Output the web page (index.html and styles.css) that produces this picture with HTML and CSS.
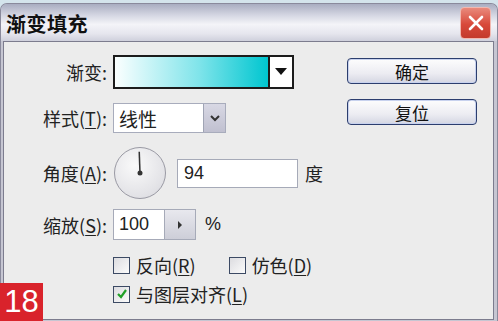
FILE: index.html
```html
<!DOCTYPE html>
<html lang="zh-CN">
<head>
  <meta charset="UTF-8">
  <title>渐变填充</title>
  <link rel="stylesheet" href="styles.css">
</head>
<body>
  <div class="window">
    <div class="titlebar">
      <span class="title">渐变填充</span>
      <span class="close">
        <svg width="18" height="18" viewBox="0 0 18 18"><path d="M3 3 L15 15 M15 3 L3 15" stroke="#fff" stroke-width="2.6" stroke-linecap="round"/></svg>
      </span>
    </div>

    <div class="content">
      <div class="form">
        <div class="row r1">
          <label class="lbl">渐变:</label>
          <div class="gradient">
            <span class="swatch"></span>
            <span class="arrow">
              <svg width="12" height="8" viewBox="0 0 12 8"><path d="M0 0 H12 L6 7 Z" fill="#111"/></svg>
            </span>
          </div>
        </div>

        <div class="row r2">
          <label class="lbl">样式(<u>T</u>):</label>
          <div class="select">
            <span class="val">线性</span>
            <span class="drop">
              <svg width="10" height="7" viewBox="0 0 10 7"><path d="M1 1 L5 5 L9 1" fill="none" stroke="#333" stroke-width="2"/></svg>
            </span>
          </div>
        </div>

        <div class="row r3">
          <label class="lbl">角度(<u>A</u>):</label>
          <div class="dial">
            <svg width="52" height="52" viewBox="0 0 52 52">
              <line x1="26" y1="26" x2="25.2" y2="4" stroke="#333" stroke-width="1.6"/>
              <circle cx="26" cy="26" r="2.6" fill="#333"/>
            </svg>
          </div>
          <input class="field angle" type="text" value="94">
          <span class="unit">度</span>
        </div>

        <div class="row r4">
          <label class="lbl">缩放(<u>S</u>):</label>
          <input class="field scale" type="text" value="100">
          <span class="spin">
            <svg width="6" height="8" viewBox="0 0 6 8"><path d="M1 0 L5 4 L1 8 Z" fill="#333"/></svg>
          </span>
          <span class="unit pct">%</span>
        </div>

        <div class="row r5 checks">
          <span class="check"><span class="box"></span><span class="txt">反向(<u>R</u>)</span></span>
          <span class="check"><span class="box"></span><span class="txt">仿色(<u>D</u>)</span></span>
        </div>

        <div class="row r6 checks">
          <span class="check"><span class="box on">
            <svg width="12" height="12" viewBox="0 0 12 12"><path d="M2 6 L5 9 L10 2" fill="none" stroke="#21a028" stroke-width="2.2"/></svg>
          </span><span class="txt">与图层对齐(<u>L</u>)</span></span>
        </div>
      </div>

      <div class="actions">
        <button class="btn">确定</button>
        <button class="btn">复位</button>
      </div>
    </div>
  </div>

  <div class="badge">18</div>
</body>
</html>
```

FILE: styles.css
```css
body {
  margin: 0;
  background: #d4e4ec;
  font-family: "Noto Sans CJK SC", "Liberation Sans", sans-serif;
  color: #222;
  overflow: hidden;
}

.window {
  margin-top: 3px;
  height: 316px;
  border: 1px solid #8a8a9c;
  border-bottom: none;
  border-radius: 7px 7px 0 0;
  padding: 0 3px 3px 2px;
  background: #c6c6d2;
  display: flex;
  flex-direction: column;
}

.titlebar {
  height: 37px;
  display: flex;
  align-items: center;
  justify-content: space-between;
  padding: 0 4px 0 5px;
  border-radius: 6px 6px 0 0;
  margin: 0 -3px 0 -2px;
  background: linear-gradient(#a9adc1 0%, #d4d6e2 30%, #f4f4f8 55%, #e6e6ee 80%, #cfd0dc 100%);
}

.title {
  font-size: 20px;
  font-weight: bold;
  color: #111;
  letter-spacing: 0.5px;
  margin-top: 2px;
}

.close {
  width: 29px;
  height: 30px;
  border: 1px solid #f1b8b0;
  border-radius: 4px;
  background: linear-gradient(#e98a7c, #d8493a 55%, #c33a2c);
  display: flex;
  align-items: center;
  justify-content: center;
  margin-right: 2px;
}

.content {
  flex: 1;
  border: 1px solid #7c7c8e;
  background: #ececec;
  display: flex;
  position: relative;
}

.form {
  flex: 1;
  font-size: 18px;
}

.row {
  display: flex;
  align-items: center;
}

.r1 { height: 34px; margin-top: 13px; }
.r2 { height: 30px; margin-top: 14px; }
.r3 { height: 52px; margin-top: 14px; }
.r4 { height: 31px; margin-top: 10px; }
.r5 { height: 20px; margin-top: 15px; }
.r6 { height: 20px; margin-top: 9px; }

.lbl {
  width: 103px;
  text-align: right;
  margin-right: 6px;
}

u {
  text-decoration-thickness: 1px;
  text-underline-offset: 2px;
}

.gradient {
  width: 177px;
  height: 30px;
  border: 2px solid #1c1c1c;
  display: flex;
  background: #fff;
}

.swatch {
  flex: 1;
  background: linear-gradient(to right, #fbffff, #7fe4ea 55%, #00c6d0);
  border-right: 2px solid #1c1c1c;
}

.arrow {
  width: 22px;
  display: flex;
  align-items: center;
  justify-content: center;
}

.select {
  width: 111px;
  height: 28px;
  border: 1px solid #a8acbc;
  background: #fff;
  display: flex;
  align-items: center;
}

.select .val {
  flex: 1;
  padding-left: 5px;
  font-size: 19px;
}

.drop {
  width: 21px;
  height: 28px;
  background: linear-gradient(#d8d8e4, #c0c0d0);
  border-left: 1px solid #a0a4b4;
  display: flex;
  align-items: center;
  justify-content: center;
}

.dial {
  width: 50px;
  height: 50px;
  border: 1px solid #9a9aa4;
  border-radius: 50%;
  background: radial-gradient(circle at 40% 35%, #fafafa, #e2e2e6 70%, #d2d2d8);
  display: flex;
  align-items: center;
  justify-content: center;
  margin-left: 1px;
}

.field {
  font-family: "Liberation Sans", "Noto Sans CJK SC", sans-serif;
  font-size: 18px;
  color: #222;
  border: 1px solid #a6aab8;
  background: #fff;
  padding: 0 0 0 6px;
  box-sizing: border-box;
  outline: none;
}

.angle {
  width: 121px;
  height: 29px;
  margin-left: 11px;
}

.unit {
  margin-left: 7px;
}

.scale {
  width: 52px;
  height: 31px;
  padding-left: 5px;
}

.spin {
  width: 30px;
  height: 29px;
  border: 1px solid #a6aab8;
  border-left: none;
  background: linear-gradient(#e8e8ee, #cdced8);
  display: flex;
  align-items: center;
  justify-content: center;
}

.pct {
  font-family: "Liberation Sans", sans-serif;
  margin-left: 9px;
}

.checks {
  padding-left: 109px;
  font-size: 18px;
}

.check {
  display: flex;
  align-items: center;
  margin-right: 33px;
}

.txt {
  white-space: nowrap;
}

.box {
  width: 15px;
  height: 15px;
  border: 1px solid #3c4a64;
  background: linear-gradient(135deg, #dcdce0, #fbfbfb);
  margin-right: 6px;
  display: flex;
  align-items: center;
  justify-content: center;
}

.actions {
  width: 130px;
  margin-right: 16px;
  padding-top: 16px;
  display: flex;
  flex-direction: column;
  gap: 15px;
}

.btn {
  height: 26px;
  font-family: "Noto Sans CJK SC", sans-serif;
  font-size: 17px;
  line-height: 1;
  color: #111;
  border: 1px solid #2c3e6e;
  border-radius: 4px;
  background: linear-gradient(#fdfdfd, #ececf2 60%, #d4d6e2);
  box-shadow: inset 0 0 0 1px #c8d2ee;
  padding: 0;
}

.badge {
  position: absolute;
  left: 0;
  bottom: 0;
  width: 43px;
  height: 38px;
  background: #d9232b;
  color: #fff;
  font-family: "Liberation Sans", sans-serif;
  font-size: 31px;
  line-height: 38px;
  text-align: center;
}
```
